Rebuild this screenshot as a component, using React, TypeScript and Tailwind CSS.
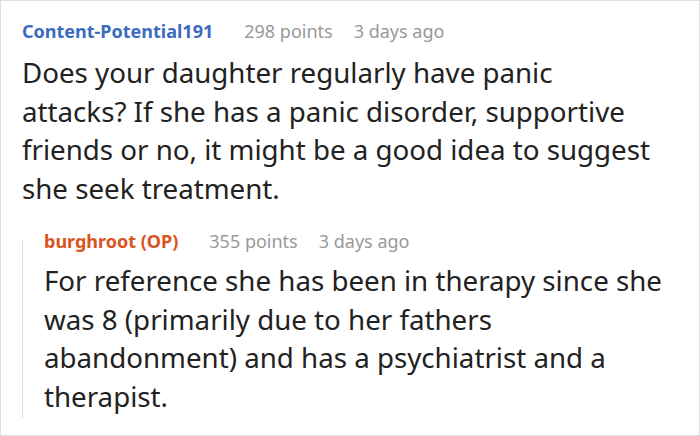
export default function App() {
  return (
    <div className="w-[700px] h-[436px] overflow-hidden bg-white border border-[#dddddd] pl-[21px] pr-[31px] pt-[17px] font-['Noto_Sans',sans-serif] text-[#222222]">
      <div className="flex items-baseline text-[18px] leading-[26px]">
        <span className="font-bold text-[#3a6bbf]">Content-Potential191</span>
        <span className="ml-[31px] text-[#999999]">298 points</span>
        <span className="ml-[21px] text-[#999999]">3 days ago</span>
      </div>
      <p className="mt-[9px] pr-[8px] text-[27.7px] leading-[38.5px]">
        Does your daughter regularly have panic attacks? If she has a panic
        disorder, supportive friends or no, it might be a good idea to suggest
        she seek treatment.
      </p>
      <div className="mt-[21px] grid grid-cols-[1px_1fr] gap-x-[21px]">
        <div className="mt-[11px] bg-[#dddddd]" />
        <div className="pb-[3px]">
          <div className="flex items-baseline text-[18px] leading-[26px]">
            <span className="font-bold text-[#d9541e]">burghroot (OP)</span>
            <span className="ml-[31px] text-[#999999]">355 points</span>
            <span className="ml-[21px] text-[#999999]">3 days ago</span>
          </div>
          <p className="mt-[7px] text-[27.7px] leading-[38.5px]">
            For reference she has been in therapy since she was 8 (primarily
            due to her fathers abandonment) and has a psychiatrist and a
            therapist.
          </p>
        </div>
      </div>
    </div>
  );
}
